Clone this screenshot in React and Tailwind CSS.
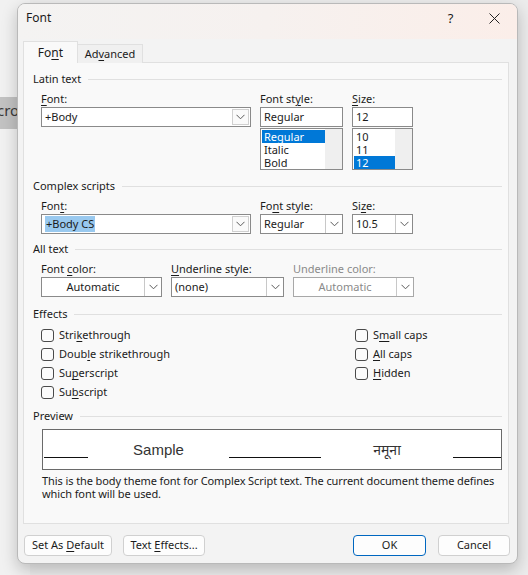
import { useState } from 'react'

const U = ({ children }) => <span className="underline underline-offset-[2px] decoration-[1px]">{children}</span>

function Chevron() {
    return (
        <svg width="9" height="6" viewBox="0 0 9 6" fill="none">
            <path d="M0.5 0.8 L4.5 4.8 L8.5 0.8" stroke="#5a5a5a" strokeWidth="1" />
        </svg>
    )
}

function Heading({ children }) {
    return (
        <div className="flex items-center h-[16px] pl-[9px] pr-[6px]">
            <span className="whitespace-nowrap">{children}</span>
            <div className="flex-1 h-px bg-[#e0e0e0] ml-[7px]" />
        </div>
    )
}

function Combo({ width, value, selected, center, disabled, inset }) {
    return (
        <div className={`flex h-[20px] border bg-white ${width} ${disabled ? 'text-[#8a8a8a] border-[#a8a8a8]' : 'border-[#8a8a8a]'}`}>
            <div className={`flex-1 flex items-center ${center ? 'justify-center' : 'pl-[3px]'}`}>
                {selected ? (
                    <span className="bg-[#99c9ef] leading-[16px] px-px">{value}</span>
                ) : (
                    <span>{value}</span>
                )}
            </div>
            <div className={`w-[17px] flex items-center justify-center ${inset ? 'm-px border border-[#d0d0d0] bg-[#fafafa]' : 'border-l border-[#c8c8c8]'}`}>
                <Chevron />
            </div>
        </div>
    )
}

function ListBox({ width, items, selected }) {
    return (
        <div className={`flex h-[42px] border border-[#8a8a8a] bg-white ${width}`}>
            <div className="flex-1 pt-px pl-px">
                {items.map(i => (
                    <div
                        key={i}
                        className={`h-[13px] leading-[13px] pl-[2px] ${i === selected ? 'bg-[#0078d7] text-white' : ''}`}
                    >
                        {i}
                    </div>
                ))}
            </div>
            <div className="w-[17px] bg-[#efefef]" />
        </div>
    )
}

function Check({ children }) {
    return (
        <div className="flex items-center h-[19px]">
            <div className="w-[13px] h-[13px] border border-[#4a4a4a] rounded-[3px] bg-[#fbfbfb]" />
            <span className="ml-[5px]">{children}</span>
        </div>
    )
}

function Line({ w }) {
    return <div className={`border-b border-[#111] ${w}`} />
}

export default function App() {
    const [tab, setTab] = useState('font')

    return (
        <div className="relative w-[528px] h-[575px] overflow-hidden bg-[#ececec] font-['Noto_Sans',sans-serif] text-[11px] text-[#1b1b1b]">
            {/* window behind the dialog */}
            <div className="absolute left-0 top-0 w-[30px] h-[575px] bg-[#f1f1f1]">
                <div className="mt-[97px] h-[32px] bg-[#c2c2c2] text-[#3a3a3a] text-[15px] leading-[26px] -ml-[3px]">cro</div>
            </div>

            <div className="absolute left-[17px] top-[3px] w-[501px] h-[561px] rounded-[8px] border border-[#b9b9b9] bg-[#f3f3f3] shadow-[0_6px_16px_rgba(0,0,0,0.22)] flex flex-col overflow-hidden">
                {/* title bar */}
                <div className="h-[35px] flex items-start pt-[6px] leading-[16px] bg-gradient-to-r from-[#f4f3f2] via-[#f6f1ef] to-[#fbeee9] shrink-0">
                    <span className="pl-[8px] text-[12px] flex-1">Font</span>
                    <div className="w-[45px] pl-[4px] text-center text-[13px]">?</div>
                    <div className="w-[46px] h-[16px] flex items-center justify-center">
                        <svg width="11" height="11" viewBox="0 0 11 11">
                            <path d="M0.5 0.5 L10.5 10.5 M10.5 0.5 L0.5 10.5" stroke="#222" strokeWidth="1" />
                        </svg>
                    </div>
                </div>

                <div className="pl-[5px] pr-[8px] pt-[3px] flex flex-col">
                    {/* tabs */}
                    <div className="flex items-end h-[21px] relative z-10">
                        <button
                            onClick={() => setTab('font')}
                            className={`w-[55px] ${tab === 'font' ? 'h-[22px] bg-[#f9f9f9]' : 'h-[19px] bg-[#f0f0f0]'} border border-[#e0e0e0] border-b-0 leading-[19px] text-[12px]`}
                        >
                            Fo<U>n</U>t
                        </button>
                        <button
                            onClick={() => setTab('advanced')}
                            className={`w-[65px] ${tab === 'advanced' ? 'h-[22px] bg-[#f9f9f9]' : 'h-[19px] bg-[#f0f0f0]'} border border-[#e0e0e0] border-b-0 border-l-0 leading-[18px] text-[11px]`}
                        >
                            Ad<U>v</U>anced
                        </button>
                    </div>

                    {/* panel */}
                    <div className="h-[462px] -mt-px border border-[#e0e0e0] bg-[#f9f9f9] pt-[8px]">
                        <Heading>Latin text</Heading>
                        <div className="flex gap-[9px] pl-[17px] mt-[4px]">
                            <div>
                                <div className="h-[16px] leading-[16px]"><U>F</U>ont:</div>
                                <Combo width="w-[210px]" value="+Body" inset />
                            </div>
                            <div>
                                <div className="h-[16px] leading-[16px]">Font st<U>y</U>le:</div>
                                <div className="flex flex-col">
                                    <div className="h-[20px] w-[83px] border border-[#8a8a8a] bg-white pl-[3px] flex items-center">Regular</div>
                                    <div className="mt-px"><ListBox width="w-[83px]" items={['Regular', 'Italic', 'Bold']} selected="Regular" /></div>
                                </div>
                            </div>
                            <div>
                                <div className="h-[16px] leading-[16px]"><U>S</U>ize:</div>
                                <div className="flex flex-col">
                                    <div className="h-[20px] w-[61px] border border-[#8a8a8a] bg-white pl-[3px] flex items-center">12</div>
                                    <div className="mt-px"><ListBox width="w-[61px]" items={['10', '11', '12']} selected="12" /></div>
                                </div>
                            </div>
                        </div>

                        <div className="mt-[8px]"><Heading>Complex scripts</Heading></div>
                        <div className="flex gap-[9px] pl-[17px] mt-[4px]">
                            <div>
                                <div className="h-[16px] leading-[16px]">Fon<U>t</U>:</div>
                                <Combo width="w-[210px]" value="+Body CS" selected inset />
                            </div>
                            <div>
                                <div className="h-[16px] leading-[16px]">Fo<U>n</U>t style:</div>
                                <Combo width="w-[83px]" value="Regular" />
                            </div>
                            <div>
                                <div className="h-[16px] leading-[16px]">Si<U>z</U>e:</div>
                                <Combo width="w-[61px]" value="10.5" />
                            </div>
                        </div>

                        <div className="mt-[7px]"><Heading>All text</Heading></div>
                        <div className="flex pl-[17px] mt-[4px]">
                            <div>
                                <div className="h-[16px] leading-[16px]">Font <U>c</U>olor:</div>
                                <Combo width="w-[121px]" value="Automatic" center />
                            </div>
                            <div className="ml-[9px]">
                                <div className="h-[16px] leading-[16px]"><U>U</U>nderline style:</div>
                                <Combo width="w-[113px]" value="(none)" />
                            </div>
                            <div className="ml-[9px]">
                                <div className="h-[16px] leading-[16px] text-[#8a8a8a]">Underline color:</div>
                                <Combo width="w-[121px]" value="Automatic" center disabled />
                            </div>
                        </div>

                        <div className="mt-[9px]"><Heading>Effects</Heading></div>
                        <div className="flex pl-[17px] mt-[4px]">
                            <div className="w-[314px]">
                                <Check>Stri<U>k</U>ethrough</Check>
                                <Check>Doub<U>l</U>e strikethrough</Check>
                                <Check>Su<U>p</U>erscript</Check>
                                <Check>Su<U>b</U>script</Check>
                            </div>
                            <div>
                                <Check>S<U>m</U>all caps</Check>
                                <Check><U>A</U>ll caps</Check>
                                <Check><U>H</U>idden</Check>
                            </div>
                        </div>

                        <div className="mt-[6px]"><Heading>Preview</Heading></div>
                        <div className="ml-[18px] mt-[5px] w-[460px] h-[41px] border border-[#6a6a6a] bg-white flex items-end pb-[11px] pl-[1px]">
                            <Line w="w-[44px]" />
                            <div className="w-[141px] text-center font-['Liberation_Sans',sans-serif] text-[15px] leading-[18px] text-[#333] -mb-[1px]">Sample</div>
                            <Line w="w-[44px]" />
                            <Line w="w-[48px]" />
                            <div className="w-[132px] text-center font-['Noto_Sans','Noto_Sans_Devanagari',sans-serif] text-[14px] leading-[20px] text-[#333] -mb-[2px]">नमूना</div>
                            <Line w="w-[48px]" />
                        </div>
                        <div className="ml-[18px] mt-[4px] leading-[13px] whitespace-nowrap tracking-[-0.09px]">
                            <div>This is the body theme font for Complex Script text. The current document theme defines</div>
                            <div>which font will be used.</div>
                        </div>
                    </div>

                    {/* buttons */}
                    <div className="flex mt-[11px] h-[21px] text-[11px] -mr-px">
                        <button className="w-[88px] h-[21px] border border-[#d0d0d0] rounded-[4px] bg-[#fdfdfd] ml-px">Set As <U>D</U>efault</button>
                        <button className="w-[82px] h-[21px] border border-[#d0d0d0] rounded-[4px] bg-[#fdfdfd] ml-[11px]">Text <U>E</U>ffects...</button>
                        <div className="flex-1" />
                        <button className="w-[73px] h-[21px] border border-[#0067c0] rounded-[4px] bg-[#fdfdfd]">OK</button>
                        <button className="w-[72px] h-[21px] border border-[#d0d0d0] rounded-[4px] bg-[#fdfdfd] ml-[12px]">Cancel</button>
                    </div>
                </div>
            </div>
        </div>
    )
}
